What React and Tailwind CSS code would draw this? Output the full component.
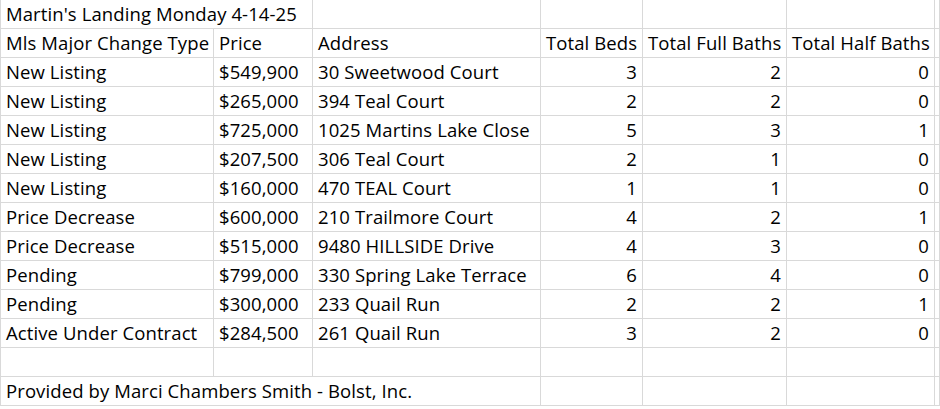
const rows = [
  ['New Listing', '$549,900', '30 Sweetwood Court', 3, 2, 0],
  ['New Listing', '$265,000', '394 Teal Court', 2, 2, 0],
  ['New Listing', '$725,000', '1025 Martins Lake Close', 5, 3, 1],
  ['New Listing', '$207,500', '306 Teal Court', 2, 1, 0],
  ['New Listing', '$160,000', '470 TEAL Court', 1, 1, 0],
  ['Price Decrease', '$600,000', '210 Trailmore Court', 4, 2, 1],
  ['Price Decrease', '$515,000', '9480 HILLSIDE Drive', 4, 3, 0],
  ['Pending', '$799,000', '330 Spring Lake Terrace', 6, 4, 0],
  ['Pending', '$300,000', '233 Quail Run', 2, 2, 1],
  ['Active Under Contract', '$284,500', '261 Quail Run', 3, 2, 0],
]

const cell = 'h-[29px] border-r border-b border-[#d9d9d9] leading-[28px] whitespace-nowrap overflow-hidden'
const left = cell + ' pl-[5px]'
const right = cell + ' pr-[5px] text-right'

export default function App() {
  return (
    <div className="w-[940px] h-[409px] overflow-hidden bg-white text-black text-[18.5px] tracking-[0.1px] font-['Open_Sans',sans-serif]">
      <div className="grid grid-cols-[214px_99px_228px_102px_144px_148px_1fr]">
        <div className={left + ' col-span-2 border-l'}>Martin's Landing Monday 4-14-25</div>
        <div className={cell}></div>
        <div className={cell}></div>
        <div className={cell}></div>
        <div className={cell}></div>
        <div className={cell}></div>

        <div className={left + ' border-l'}>Mls Major Change Type</div>
        <div className={left}>Price</div>
        <div className={left}>Address</div>
        <div className={left}>Total Beds</div>
        <div className={left}>Total Full Baths</div>
        <div className={left}>Total Half Baths</div>
        <div className={cell}></div>

        {rows.map((r, i) => (
          <div key={i} className="contents">
            <div className={left + ' border-l'}>{r[0]}</div>
            <div className={left}>{r[1]}</div>
            <div className={left}>{r[2]}</div>
            <div className={right}>{r[3]}</div>
            <div className={right}>{r[4]}</div>
            <div className={right}>{r[5]}</div>
            <div className={cell}></div>
          </div>
        ))}

        <div className={cell + ' border-l'}></div>
        <div className={cell}></div>
        <div className={cell}></div>
        <div className={cell}></div>
        <div className={cell}></div>
        <div className={cell}></div>
        <div className={cell}></div>

        <div className={left + ' col-span-3 border-l'}>Provided by Marci Chambers Smith - Bolst, Inc.</div>
        <div className={cell}></div>
        <div className={cell}></div>
        <div className={cell}></div>
        <div className={cell}></div>
      </div>
    </div>
  )
}
